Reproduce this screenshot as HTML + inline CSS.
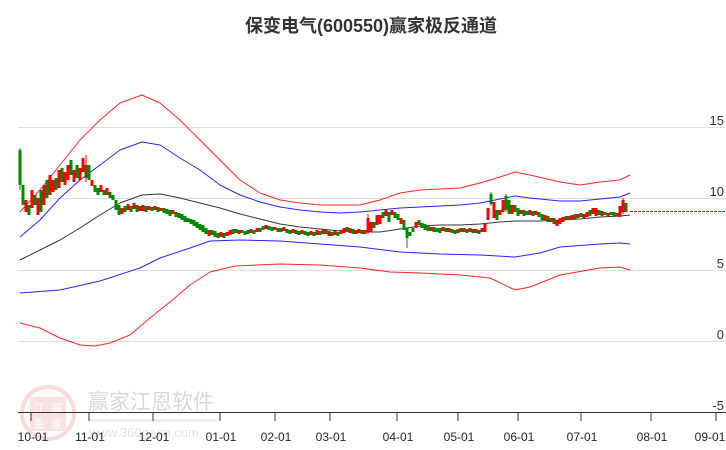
<!DOCTYPE html>
<html><head><meta charset="utf-8"><style>
html,body{margin:0;padding:0;background:#fff;width:726px;height:450px;overflow:hidden}
svg{display:block}
text{font-family:"Liberation Sans","Noto Sans CJK SC",sans-serif}
</style></head><body>
<svg width="726" height="450" viewBox="0 0 726 450">
<text x="371" y="32" text-anchor="middle" font-size="18" font-weight="bold" fill="#333" font-family="'Liberation Sans','Noto Sans CJK SC',sans-serif">保变电气(600550)赢家极反通道</text>
<g stroke="#ddd" stroke-width="1">
<line x1="18" y1="127.5" x2="726" y2="127.5"/>
<line x1="18" y1="198.5" x2="726" y2="198.5"/>
<line x1="18" y1="270.5" x2="726" y2="270.5"/>
<line x1="18" y1="341.5" x2="726" y2="341.5"/>
</g>
<g font-size="13" fill="#333" text-anchor="end">
<text x="724" y="125">15</text><text x="724" y="196">10</text><text x="724" y="268">5</text><text x="724" y="339">0</text><text x="724" y="410">-5</text>
</g>
<!-- watermark -->
<g opacity="0.6">
<circle cx="48" cy="413" r="26" fill="none" stroke="#f3c4c4" stroke-width="4"/>
<rect x="30" y="397" width="36" height="34" fill="#f4cfcf"/>
<text x="39" y="412" font-size="11" fill="#fff" text-anchor="middle">江</text><text x="57" y="412" font-size="11" fill="#fff" text-anchor="middle">赢</text>
<text x="39" y="428" font-size="11" fill="#fff" text-anchor="middle">恩</text><text x="57" y="428" font-size="11" fill="#fff" text-anchor="middle">家</text>
</g>
<text x="88" y="409" font-size="21" fill="#d8d8d8">赢家江恩软件</text>
<rect x="89" y="419" width="128" height="3" fill="#eee"/>
<text x="89" y="437" font-size="13" fill="#e2e2e2">www.360gann.com</text>
<!-- bands -->
<g fill="none" stroke-width="1" stroke-linejoin="round" opacity="0.85">
<polyline stroke="#f00" points="20,212 40,190 60,165 80,140 100,120 120,103 142,95 160,103 180,120 200,140 220,160 240,180 260,193 280,200 300,203 320,205 340,205 360,205 380,200 400,193 420,190 440,189 460,188 480,183 500,177 515,172 530,175 560,182 580,185 600,182 620,180 630,175"/>
<polyline stroke="#00f" points="20,237 40,220 60,198 80,180 100,165 120,150 142,142 160,145 180,158 200,170 220,185 240,195 260,202 280,207 300,210 320,212 340,213 360,212 380,210 400,208 420,207 440,206 460,205 480,203 500,199 515,196 530,198 560,201 580,201 600,199 620,197 630,193"/>
<polyline stroke="#111" points="20,260 40,250 60,240 80,228 100,215 120,203 142,195 160,194 180,198 200,203 220,208 240,214 260,219 280,224 300,227 320,229 340,231 360,232 380,232 400,229 420,226 440,225 460,225 480,224 500,222 515,221 540,221 560,220 580,219 600,217 620,216 630,215"/>
<polyline stroke="#00f" points="20,293 60,290 100,281 140,268 160,258 190,248 210,241 240,240 280,241 320,244 360,247 400,252 440,254 480,255 515,257 540,253 560,247 600,244 620,243 630,244"/>
<polyline stroke="#f00" points="20,323 40,328 60,338 80,345 95,346 110,343 130,335 150,318 170,302 190,285 210,272 235,266 280,264 320,265 360,268 390,272 420,273 460,275 490,278 515,290 530,287 560,275 600,268 620,267 630,270"/>
</g>
<line x1="630" y1="211.5" x2="726" y2="211.5" stroke="#080" stroke-dasharray="3,1"/>
<!-- candles -->
<path fill="none" stroke="#080" stroke-width="1" d="M20 148V190M407 228V248M491 192V206M506 194V212"/>
<path fill="none" stroke="#080" stroke-width="3" d="M20 150V185M23 185V205M29 205V215M35 195V205M41 190V212M47 180V198M56 178V190M62 168V182M71 160V175M77 165V178M86 165V178M89 165V180M95 185V192M98 188V195M104 190V195M110 192V198M113 195V200M116 200V210M119 205V215M125 206V212M131 206V212M137 205V212M146 206V212M152 207V211M158 207V212M164 208V213M167 209V214M170 210V216M176 212V217M179 213V218M182 214V220M185 216V222M188 218V222M191 219V224M194 220V226M197 222V228M200 224V230M203 225V232M206 228V234M212 230V235M215 231V237M218 233V238M224 233V238M233 229V234M236 229V233M242 230V233M245 231V235M248 230V234M254 230V234M260 228V232M263 226V230M269 226V230M272 227V231M278 228V232M281 228V232M287 229V233M290 230V234M296 230V234M299 231V235M305 231V235M308 232V236M314 232V236M320 231V235M326 230V234M332 232V236M338 232V236M347 227V232M353 229V234M362 230V234M374 222V228M383 212V218M389 212V222M395 212V218M398 214V220M404 220V230M407 228V238M410 232V236M413 228V232M419 220V225M422 223V228M425 224V230M428 226V231M434 227V232M437 228V232M440 228V233M446 228V232M452 229V233M455 230V234M461 228V232M467 229V233M473 229V233M479 230V234M491 194V204M497 210V220M506 196V210M509 200V214M515 205V212M518 208V216M524 210V216M527 211V215M533 211V216M539 212V217M542 214V220M548 216V222M554 218V224M566 216V220M575 214V219M581 213V217M590 210V216M599 210V215M605 212V215M611 212V215M614 212V216M626 203V212"/>
<path fill="none" stroke="#f00" stroke-width="1" d="M86 155V182M623 198V214M368 214V234"/>
<path fill="none" stroke="#f00" stroke-width="3" d="M26 200V212M32 190V208M38 198V215M44 185V205M50 175V195M53 180V192M59 170V188M65 172V185M68 165V180M74 170V182M80 168V180M83 158V172M92 180V186M101 185V192M107 188V195M122 208V214M128 204V210M134 203V209M140 206V211M143 205V211M149 206V210M155 206V210M161 208V211M173 210V214M209 230V236M221 232V237M227 232V236M230 230V235M239 230V234M251 229V233M257 228V232M266 225V229M275 227V230M284 227V231M293 229V233M302 230V234M311 231V235M317 230V235M323 229V234M329 231V236M335 231V235M341 230V234M344 228V233M350 228V233M356 230V234M359 229V233M365 230V234M368 218V232M371 222V232M377 215V225M380 215V224M386 210V216M392 210V215M401 218V224M416 222V228M431 227V231M443 227V231M449 228V232M458 229V233M464 228V232M470 228V232M476 229V233M482 228V232M485 224V232M488 208V220M494 202V218M500 210V215M503 200V212M512 205V214M521 210V214M530 210V215M536 211V215M545 215V220M551 218V222M557 220V226M560 218V224M563 217V222M569 216V220M572 215V219M578 214V218M584 214V218M587 212V217M593 208V214M596 208V216M602 211V216M608 213V216M617 213V216M620 206V217M623 200V212"/>
<!-- x axis -->
<line x1="18" y1="412.5" x2="726" y2="412.5" stroke="#333"/>
<g stroke="#333"><path d="M31 413V421M89 413V421M153 413V421M220 413V421M275 413V421M330 413V421M397 413V421M458 413V421M518 413V421M581 413V421M651 413V421M716 413V421"/></g>
<g font-size="12" fill="#223" text-anchor="middle">
<text x="33" y="441">10-01</text><text x="90" y="441">11-01</text><text x="154" y="441">12-01</text><text x="221" y="441">01-01</text><text x="276" y="441">02-01</text><text x="331" y="441">03-01</text><text x="398" y="441">04-01</text><text x="459" y="441">05-01</text><text x="519" y="441">06-01</text><text x="582" y="441">07-01</text><text x="652" y="441">08-01</text><text x="710" y="441">09-01</text>
</g>
</svg>
</body></html>
